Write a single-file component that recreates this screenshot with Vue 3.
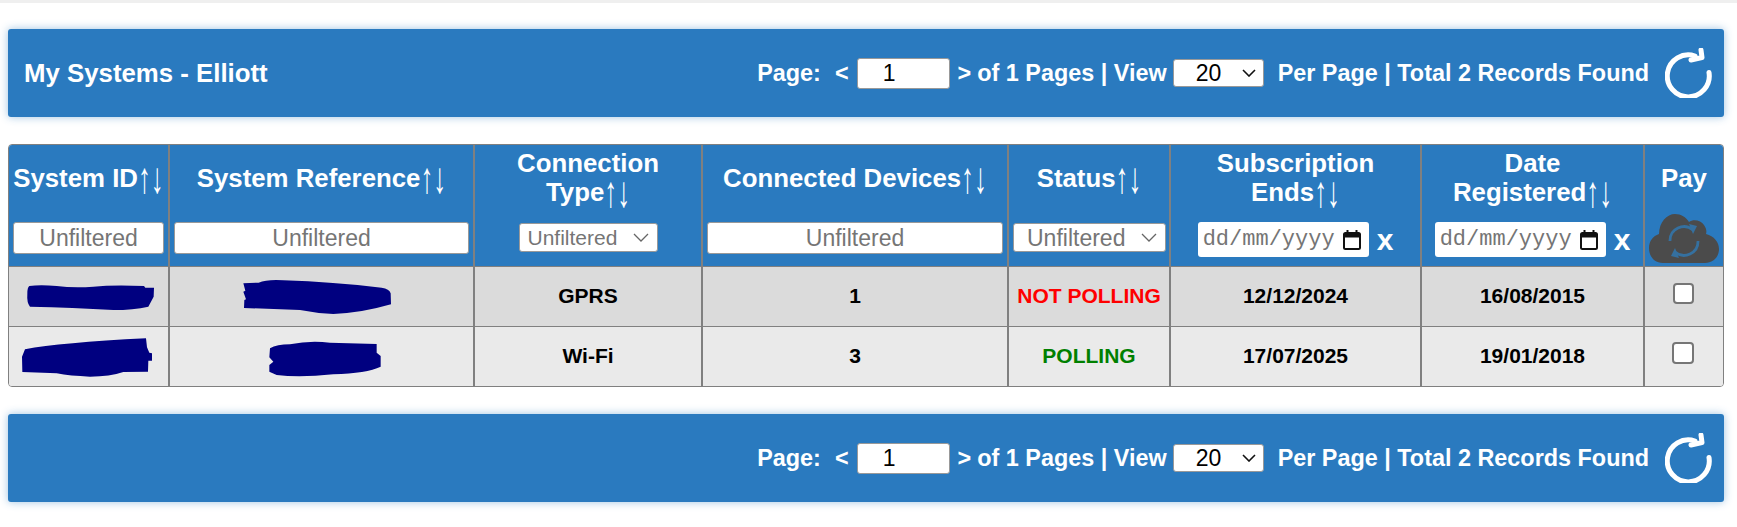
<script setup>
import { ref } from 'vue'

const page = ref(1)
const perPage = ref(20)

const rows = [
  {
    id: 1,
    boxId: '27 63 480 150',
    boxRef: '726 63 480 150',
    blotId: 'M88 108 Q120 104 170 108 Q220 114 280 110 Q340 104 432 108 L436 113 L462 113 L461 140 L445 170 Q400 180 340 180 Q220 172 90 170 Q80 160 82 130 Q82 112 88 108 Z',
    blotRef: 'M730 100 L776 98 Q800 88 850 91 Q1000 96 1145 113 Q1168 116 1172 130 L1173 163 Q1080 190 1000 192 Q950 190 900 180 L732 174 L733 150 L738 148 L730 125 L736 122 Z',
    type: 'GPRS',
    devices: 1,
    status: 'NOT POLLING',
    statusClass: 'bad',
    ends: '12/12/2024',
    registered: '16/08/2015'
  },
  {
    id: 2,
    boxId: '27 243 480 150',
    boxRef: '726 243 480 150',
    blotId: 'M75 298 Q180 278 438 265 L441 292 L448 308 L456 310 L456 332 L445 332 L444 365 L370 366 Q330 380 270 380 Q210 378 170 370 L67 366 L66 320 Z',
    blotRef: 'M810 295 Q830 283 870 283 Q930 270 990 278 L1130 282 L1130 308 L1142 318 L1142 350 Q1100 370 1000 373 Q900 383 830 375 L808 365 L808 345 L820 335 L808 322 Z',
    type: 'Wi-Fi',
    devices: 3,
    status: 'POLLING',
    statusClass: 'good',
    ends: '17/07/2025',
    registered: '19/01/2018'
  }
]
</script>

<template>
  <div class="page">
    <div class="top-strip"></div>

    <div class="bar first-bar">
      <h1 class="bar-title">My Systems - Elliott</h1>
      <div class="pager">
        <span>Page:</span>
        <span class="arrow first-arrow">&lt;</span>
        <input v-model="page" class="page-input" type="text" />
        <span class="arrow">&gt;</span>
        <span>of 1 Pages | View</span>
        <select v-model="perPage" class="per-page">
          <option :value="20">20</option>
          <option :value="50">50</option>
        </select>
        <span class="per-text">Per Page | Total 2 Records Found</span>
        <svg class="refresh" viewBox="0 0 47 50" fill="none" stroke="#fff" stroke-width="5" stroke-linecap="round" stroke-linejoin="round">
          <path d="M30 8 A21 21 0 1 0 44 24.500" />
          <path d="M36 2 L37 9.500 L26 12" />
        </svg>
      </div>
    </div>

    <div class="table-wrap">
      <table class="systems">
        <colgroup>
          <col style="width: 160px" />
          <col style="width: 305px" />
          <col style="width: 228px" />
          <col style="width: 306px" />
          <col style="width: 162px" />
          <col style="width: 251px" />
          <col style="width: 223px" />
          <col />
        </colgroup>
        <thead>
          <tr>
            <th>
              <div class="th-label"><span>System ID<span class="sort">↑↓</span></span></div>
              <input class="filter" type="text" placeholder="Unfiltered" />
            </th>
            <th>
              <div class="th-label"><span>System Reference<span class="sort">↑↓</span></span></div>
              <input class="filter" type="text" placeholder="Unfiltered" />
            </th>
            <th>
              <div class="th-label"><span>Connection<br />Type<span class="sort">↑↓</span></span></div>
              <select class="filter-select type-select"><option>Unfiltered</option></select>
            </th>
            <th>
              <div class="th-label"><span>Connected Devices<span class="sort">↑↓</span></span></div>
              <input class="filter" type="text" placeholder="Unfiltered" />
            </th>
            <th>
              <div class="th-label"><span>Status<span class="sort">↑↓</span></span></div>
              <select class="filter-select status-select"><option>Unfiltered</option></select>
            </th>
            <th v-for="label in ['Subscription', 'Date']" :key="label">
              <div class="th-label">
                <span>{{ label }}<br />{{ label === 'Date' ? 'Registered' : 'Ends' }}<span class="sort">↑↓</span></span>
              </div>
              <div class="date-filter">
                <div class="date-box">
                  <span class="date-text">dd/mm/yyyy</span>
                  <svg class="cal" viewBox="0 0 18 20">
                    <path d="M4.500 0v3M13.500 0v3" stroke="#111" stroke-width="2" />
                    <rect x="1" y="3" width="16" height="16" rx="1.500" fill="none" stroke="#111" stroke-width="2" />
                    <rect x="1" y="3" width="16" height="4.500" fill="#111" />
                  </svg>
                </div>
                <span class="clear">x</span>
              </div>
            </th>
            <th>
              <div class="th-label"><span>Pay</span></div>
              <svg class="cloud" viewBox="0 0 70 49">
                <path d="M14 49 C5 49 0 42 0 34 C0 27 4 22 10 20 C10 8 18 0 26 0 C32 0 37 3 40 8 C44 5 52 6 55 11 C57 14 58 17 57 20 C65 22 70 28 70 35 C70 43 64 49 56 49 Z" fill="#4b4b4b" />
                <path d="M21 27 A14 14 0 0 1 44 16 M49 27 A14 14 0 0 1 26 38" fill="none" stroke="#35709f" stroke-width="2.800" />
                <path d="M40 10 L48 12 L44 20 Z M30 44 L22 42 L26 34 Z" fill="#35709f" />
              </svg>
            </th>
          </tr>
        </thead>
        <tbody>
          <tr v-for="row in rows" :key="row.id">
            <td>
              <svg class="blot" :viewBox="row.boxId" width="160" height="50">
                <path :d="row.blotId" fill="#000080" />
              </svg>
            </td>
            <td>
              <svg class="blot" :viewBox="row.boxRef" width="160" height="50">
                <path :d="row.blotRef" fill="#000080" />
              </svg>
            </td>
            <td>{{ row.type }}</td>
            <td>{{ row.devices }}</td>
            <td :class="row.statusClass">{{ row.status }}</td>
            <td>{{ row.ends }}</td>
            <td>{{ row.registered }}</td>
            <td class="pay-cell"><span class="check"></span></td>
          </tr>
        </tbody>
      </table>
    </div>

    <div class="bar second-bar">
      <div class="pager">
        <span>Page:</span>
        <span class="arrow first-arrow">&lt;</span>
        <input v-model="page" class="page-input" type="text" />
        <span class="arrow">&gt;</span>
        <span>of 1 Pages | View</span>
        <select v-model="perPage" class="per-page">
          <option :value="20">20</option>
          <option :value="50">50</option>
        </select>
        <span class="per-text">Per Page | Total 2 Records Found</span>
        <svg class="refresh" viewBox="0 0 47 50" fill="none" stroke="#fff" stroke-width="5" stroke-linecap="round" stroke-linejoin="round">
          <path d="M30 8 A21 21 0 1 0 44 24.500" />
          <path d="M36 2 L37 9.500 L26 12" />
        </svg>
      </div>
    </div>
  </div>
</template>

<style scoped>
.page {
  height: 527px;
  overflow: hidden;
  background: #fff;
  font-family: "Liberation Sans", Arial, sans-serif;
}

.top-strip {
  height: 3px;
  background: #efefef;
}

.bar {
  display: flex;
  align-items: center;
  justify-content: space-between;
  height: 88px;
  margin: 26px 13px 0 8px;
  padding: 0 12px 0 16px;
  background: #2a7abf;
  border-radius: 3px;
  box-shadow: 0 0 8px rgba(42, 122, 191, 0.45);
  color: #fff;
}

.second-bar {
  justify-content: flex-end;
  margin-top: 27px;
}

.bar-title {
  margin: 0;
  font-size: 25.800px;
  font-weight: 700;
}

.pager {
  display: flex;
  align-items: center;
  font-size: 23.400px;
  font-weight: 700;
  white-space: nowrap;
}

.arrow {
  margin: 0 6px 0 8px;
}

.first-arrow {
  margin-left: 14px;
  margin-right: 8px;
}

.page-input {
  box-sizing: border-box;
  width: 93px;
  height: 31px;
  border: 1px solid #999;
  border-radius: 3px;
  padding: 0 28px 0 0;
  text-align: center;
  font-family: inherit;
  font-size: 23px;
  font-weight: 400;
  color: #000;
}

.per-page {
  box-sizing: border-box;
  width: 91px;
  height: 28px;
  margin: 0 14px 0 6px;
  border: 1px solid #999;
  border-radius: 3px;
  padding: 0 0 0 22px;
  appearance: none;
  background: #fff url("data:image/svg+xml,%3Csvg xmlns='http://www.w3.org/2000/svg' width='14' height='8'%3E%3Cpath d='M1 1l6 6 6-6' fill='none' stroke='%23111' stroke-width='1.600'/%3E%3C/svg%3E") no-repeat right 7px center;
  font-family: inherit;
  font-size: 23px;
  font-weight: 400;
  color: #000;
}

.refresh {
  width: 47px;
  height: 50px;
  margin-left: 16px;
}

.table-wrap {
  margin: 27px 13px 0 8px;
  border: 1px solid #808080;
  border-radius: 4px;
  overflow: hidden;
}

.systems {
  width: 100%;
  table-layout: fixed;
  border-collapse: collapse;
}

.systems th {
  height: 121px;
  padding: 0 4px;
  background: #2a7abf;
  border-left: 2px solid #808080;
  color: #fff;
  vertical-align: top;
  text-align: center;
  box-sizing: border-box;
}

.systems th:first-child,
.systems td:first-child {
  border-left: 0;
}

.th-label {
  display: flex;
  align-items: center;
  justify-content: center;
  height: 66px;
  margin: 0 -4px 11px;
  font-size: 25.800px;
  font-weight: 700;
  line-height: 29px;
  white-space: nowrap;
}

.sort {
  display: inline-block;
  font-weight: 400;
  line-height: 12px;
  transform: scaleY(1.700);
}

.filter {
  display: block;
  box-sizing: border-box;
  width: 100%;
  height: 32px;
  border: 1px solid #999;
  border-radius: 3px;
  text-align: center;
  font-family: inherit;
  font-size: 23px;
  background: #fff;
}

.filter::placeholder {
  color: #757575;
}

.filter-select {
  box-sizing: border-box;
  height: 29px;
  margin-top: 1px;
  border: 1px solid #999;
  border-radius: 3px;
  appearance: none;
  background: #fff url("data:image/svg+xml,%3Csvg xmlns='http://www.w3.org/2000/svg' width='16' height='9'%3E%3Cpath d='M1 1l7 7 7-7' fill='none' stroke='%23666' stroke-width='1.300'/%3E%3C/svg%3E") no-repeat right 8px center;
  color: #757575;
  font-family: inherit;
}

.type-select {
  width: 139px;
  padding-left: 8px;
  font-size: 21px;
}

.status-select {
  width: 153px;
  margin-right: 4px;
  padding-left: 13px;
  font-size: 23px;
}

.date-filter {
  display: flex;
  align-items: center;
  justify-content: center;
  gap: 8px;
}

.date-box {
  display: flex;
  align-items: center;
  justify-content: space-between;
  box-sizing: border-box;
  width: 171px;
  height: 35px;
  padding: 0 8px 0 5px;
  background: #fff;
  border-radius: 3px;
}

.date-text {
  font-family: "Liberation Mono", monospace;
  font-size: 22px;
  font-weight: 400;
  color: #757575;
}

.cal {
  width: 18px;
  height: 20px;
}

.clear {
  font-size: 30px;
  font-weight: 700;
  line-height: 1;
}

.cloud {
  display: block;
  width: 70px;
  height: 49px;
  margin: -8px auto 0;
}

.systems td {
  height: 60px;
  padding: 0;
  border-left: 2px solid #808080;
  border-top: 1px solid #808080;
  text-align: center;
  font-size: 21px;
  font-weight: 700;
  color: #000;
  box-sizing: border-box;
}

.systems tbody tr:nth-child(odd) td {
  background: #dbdbdb;
}

.systems tbody tr:nth-child(even) td {
  background: #eaeaea;
}

.systems td.bad {
  color: #f00;
}

.systems td.good {
  color: #008000;
}

.blot {
  display: block;
  margin: 0 auto;
}

.check {
  display: inline-block;
  box-sizing: border-box;
  width: 21px;
  height: 21px;
  margin: 0 2px 6px 0;
  vertical-align: middle;
  background: #fff;
  border: 2px solid #767676;
  border-radius: 4px;
}

.systems tbody tr:nth-child(even) .check {
  width: 22px;
  height: 22px;
}
</style>
